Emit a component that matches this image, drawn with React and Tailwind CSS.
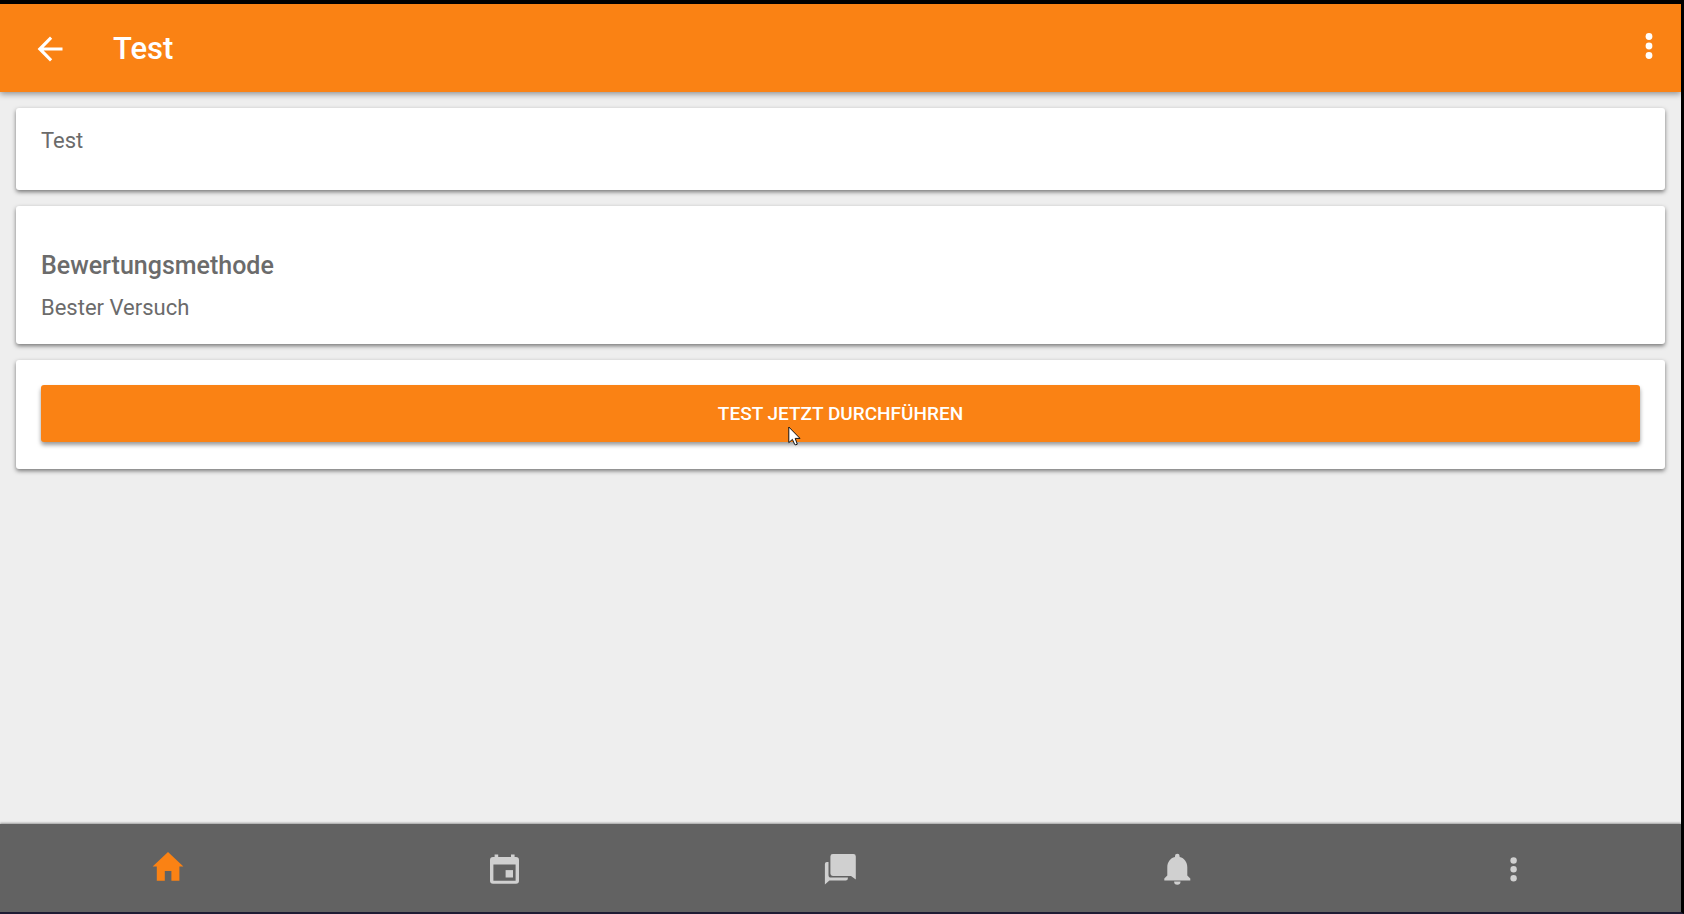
import { useState } from 'react'

function BackIcon() {
  return (
    <svg width="26" height="26" viewBox="0 0 26 26" fill="currentColor" aria-hidden="true">
      <path d="M25.5 11.4H6.6l8.6-8.6L13 .6.6 13 13 25.4l2.2-2.2-8.6-8.6h18.9z" />
    </svg>
  )
}

function DotsIcon() {
  return (
    <svg width="8" height="28" viewBox="0 0 8 28" fill="currentColor" aria-hidden="true">
      <circle cx="4" cy="4.5" r="3.4" />
      <circle cx="4" cy="14" r="3.4" />
      <circle cx="4" cy="23.5" r="3.4" />
    </svg>
  )
}

function TabIcon({ children }) {
  return (
    <svg width="34" height="34" viewBox="0 0 34 34" fill="currentColor" aria-hidden="true">
      {children}
    </svg>
  )
}

const TABS = [
  {
    id: 'home',
    label: 'Startseite',
    icon: <path d="M17 1 1.6 15.4h4.2v14.4h8V20h6.600v9.800h8V15.400h4z" />,
  },
  {
    id: 'calendar',
    label: 'Kalender',
    icon: (
      <>
        <path
          fillRule="evenodd"
          d="M7.600 3.500v2.600H6a3 3 0 0 0-3 3v20.600a3 3 0 0 0 3 3h23a3 3 0 0 0 3-3V9.100a3 3 0 0 0-3-3h-1.400V3.500H24v2.600H11.200V3.500zM6.400 13.500h22.200v16.200H6.400z"
        />
        <path d="M18.600 19.100h7.400v7.400h-7.400z" />
      </>
    ),
  },
  {
    id: 'messages',
    label: 'Mitteilungen',
    icon: (
      <>
        <path d="M9.800 3h20.600a2.400 2.400 0 0 1 2.400 2.400v23.200L28 25H9.800a2.400 2.400 0 0 1-2.400-2.400V5.400A2.400 2.400 0 0 1 9.800 3z" />
        <path d="M3.900 11h1.600v13a2.600 2.600 0 0 0 2.600 2.600h16.800v.6a2.200 2.200 0 0 1-2.200 2.200H6.400L1.900 33.600V13a2 2 0 0 1 2-2z" />
      </>
    ),
  },
  {
    id: 'notifications',
    label: 'Benachrichtigungen',
    icon: (
      <>
        <path d="M17.300 2.800A2.300 2.300 0 0 0 15 5.100v.8c-4.900 1.100-7.700 5.300-7.700 10.300v8.200l-3 3v2h26v-2l-3-3v-8.200c0-5-2.800-9.200-7.700-10.300v-.8a2.300 2.300 0 0 0-2.300-2.300z" />
        <path d="M14.100 30.600h6.400a3.200 3.200 0 0 1-6.400 0z" />
      </>
    ),
  },
  {
    id: 'more',
    label: 'Mehr',
    icon: (
      <>
        <circle cx="17.600" cy="9.500" r="3.200" />
        <circle cx="17.600" cy="18.300" r="3.200" />
        <circle cx="17.600" cy="27.200" r="3.200" />
      </>
    ),
  },
]

function Card({ children }) {
  return (
    <section className="rounded-[3px] bg-white px-[25px] shadow-[0_2px_4px_rgba(0,0,0,0.5)]">
      {children}
    </section>
  )
}

export default function App() {
  const [tab, setTab] = useState('home')

  return (
    <div className="flex h-screen flex-col border-t-4 border-r-3 border-b-2 border-t-black border-r-black border-b-[#1f1c35] bg-[#eeeeee] font-['Roboto',sans-serif] text-[#6b6b6b]">
      <header className="relative flex h-[88px] shrink-0 items-center bg-[#fa8214] pt-0.5 pr-7 pl-[37px] text-white shadow-[0_2px_6px_rgba(0,0,0,0.4)]">
        <button type="button" aria-label="Zurück">
          <BackIcon />
        </button>
        <h1 className="ml-[50px] flex-1 text-[31px] leading-10 font-medium">Test</h1>
        <button type="button" aria-label="Menü" className="mb-1.5">
          <DotsIcon />
        </button>
      </header>

      <main className="flex flex-1 flex-col gap-4 p-4">
        <Card>
          <p className="pt-[19px] pb-[35px] text-[22px] leading-7">Test</p>
        </Card>

        <Card>
          <div className="pt-11 pb-[22px]">
            <h2 className="text-[25px] leading-8 font-medium">Bewertungsmethode</h2>
            <p className="mt-3 text-[22px] leading-7">Bester Versuch</p>
          </div>
        </Card>

        <Card>
          <div className="pt-[25px] pb-[27px]">
            <button
              type="button"
              className="relative block h-[57px] w-full rounded-[3px] bg-[#fa8214] text-[19px] leading-6 font-medium text-white uppercase shadow-[0_3px_4px_rgba(0,0,0,0.4)]"
            >
              Test jetzt durchführen
              {/* Mouse pointer */}
              <svg
                className="absolute top-[41px] left-1/2 -ml-[53px]"
                width="13"
                height="20"
                viewBox="0 0 13 20"
                aria-hidden="true"
              >
                <path
                  d="M.8 1v15.600l3.600-3.200 2.300 5.100q1 .8 2.600-.3L7.200 12.400h4.800z"
                  fill="#fff"
                  stroke="#111"
                  strokeWidth="1"
                />
              </svg>
            </button>
          </div>
        </Card>
      </main>

      <nav className="grid h-[88px] shrink-0 grid-cols-5 bg-[#626262] shadow-[0_-1px_2px_rgba(0,0,0,0.35)]">
        {TABS.map(t => (
          <button
            key={t.id}
            type="button"
            aria-label={t.label}
            onClick={() => setTab(t.id)}
            className={`flex items-center justify-center ${tab === t.id ? 'text-[#fa8214]' : 'text-[#d0d0d0]'}`}
          >
            <TabIcon>{t.icon}</TabIcon>
          </button>
        ))}
      </nav>
    </div>
  )
}
